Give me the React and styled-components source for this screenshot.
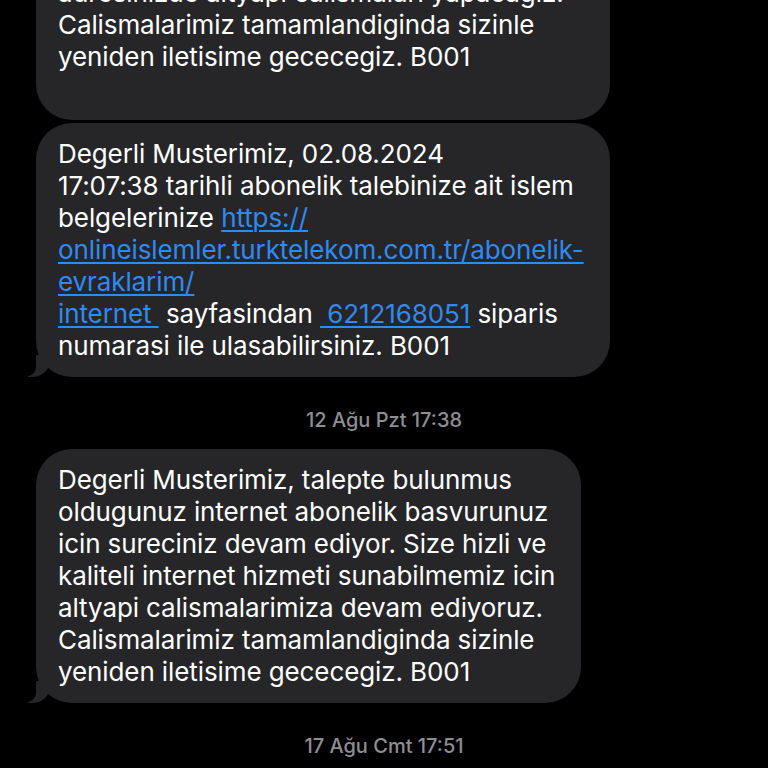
import React from 'react';
import styled, { createGlobalStyle } from 'styled-components';

const GlobalStyle = createGlobalStyle`
  html, body {
    margin: 0;
    padding: 0;
    background: #000;
  }
  body {
    font-family: Inter, "Noto Sans", "Liberation Sans", sans-serif;
  }
`;

const Screen = styled.div`
  width: 768px;
  height: 768px;
  overflow: hidden;
  background: #000;
`;

const Thread = styled.div`
  display: flex;
  flex-direction: column;
  align-items: flex-start;
  gap: 3px;
  padding-left: 36px;
  margin-top: -166px;
`;

const Bubble = styled.div`
  position: relative;
  box-sizing: border-box;
  min-width: ${(p) => p.$minWidth || 0}px;
  background: #262628;
  color: #fff;
  border-radius: 36px;
  padding: ${(p) => (p.$extra ? '15px 26px 47px 22px' : '15px 26px 15px 22px')};
  font-size: 26px;
  line-height: 32px;
  letter-spacing: -0.1px;

  ${(p) =>
    p.$tail &&
    `
    &::before {
      content: '';
      position: absolute;
      bottom: 0;
      left: -8px;
      width: 22px;
      height: 22px;
      background: #262628;
      border-bottom-right-radius: 18px 16px;
    }
    &::after {
      content: '';
      position: absolute;
      bottom: 0;
      left: -24px;
      width: 24px;
      height: 24px;
      background: #000;
      border-bottom-right-radius: 12px 10px;
    }
  `}
`;

const Line = styled.div`
  white-space: pre;
  position: relative;
  z-index: 1;
`;

const Link = styled.span`
  color: #2f8af2;
  text-decoration: underline;
  text-decoration-thickness: 1.5px;
  text-underline-offset: 3px;
`;

const Stamp = styled.div`
  align-self: stretch;
  margin-left: -36px;
  text-align: center;
  color: #8e8e93;
  font-size: 20px;
  line-height: 22px;
  font-weight: 500;
  margin-top: 29px;
  margin-bottom: 15px;
`;

const longMessage = [
  'Degerli Musterimiz, talepte bulunmus',
  'oldugunuz internet abonelik basvurunuz',
  'icin sureciniz devam ediyor. Size hizli ve',
  'kaliteli internet hizmeti sunabilmemiz icin',
  'adresinizde altyapi calismalari yapacagiz.',
  'Calismalarimiz tamamlandiginda sizinle',
  'yeniden iletisime gececegiz. B001',
];

const shortMessage = [
  'Degerli Musterimiz, talepte bulunmus',
  'oldugunuz internet abonelik basvurunuz',
  'icin sureciniz devam ediyor. Size hizli ve',
  'kaliteli internet hizmeti sunabilmemiz icin',
  'altyapi calismalarimiza devam ediyoruz.',
  'Calismalarimiz tamamlandiginda sizinle',
  'yeniden iletisime gececegiz. B001',
];

export default function App() {
  return (
    <Screen>
      <GlobalStyle />
      <Thread>
        <Bubble $extra $minWidth={574}>
          {longMessage.map((l, i) => (
            <Line key={i}>{l}</Line>
          ))}
        </Bubble>
        <Bubble $tail>
          <Line>Degerli Musterimiz, 02.08.2024</Line>
          <Line>17:07:38 tarihli abonelik talebinize ait islem</Line>
          <Line>
            belgelerinize <Link>https://</Link>
          </Line>
          <Line>
            <Link>onlineislemler.turktelekom.com.tr/abonelik-</Link>
          </Line>
          <Line>
            <Link>evraklarim/</Link>
          </Line>
          <Line>
            <Link>internet </Link> sayfasindan <Link> 6212168051</Link> siparis
          </Line>
          <Line>numarasi ile ulasabilirsiniz. B001</Line>
        </Bubble>
        <Stamp>12 Ağu Pzt 17:38</Stamp>
        <Bubble $tail>
          {shortMessage.map((l, i) => (
            <Line key={i}>{l}</Line>
          ))}
        </Bubble>
        <Stamp>17 Ağu Cmt 17:51</Stamp>
      </Thread>
    </Screen>
  );
}
